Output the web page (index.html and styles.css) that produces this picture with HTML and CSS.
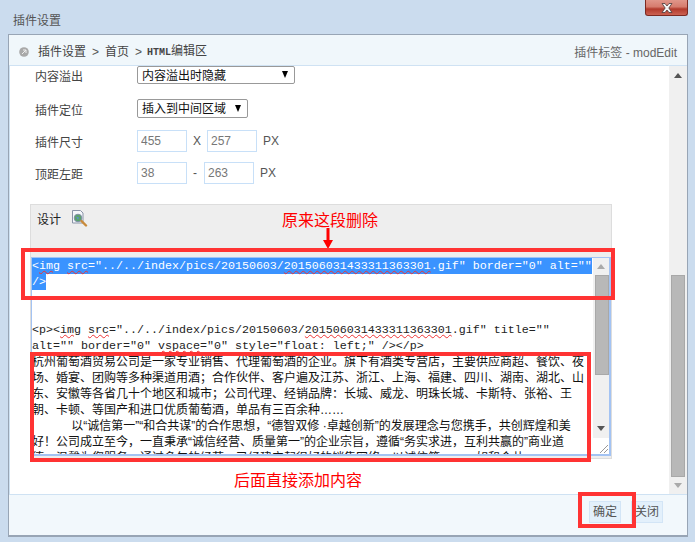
FILE: index.html
```html
<!DOCTYPE html>
<html lang="zh-CN">
<head>
<meta charset="utf-8">
<title>插件设置</title>
<link rel="stylesheet" href="styles.css">
</head>
<body>
<div class="window">
  <div class="titlebar">插件设置</div>
  <button class="close" type="button" aria-label="关闭">
    <svg width="14" height="12" viewBox="0 0 14 12"><path d="M2 1.500h3l2 2.500 2-2.500h3L8.800 6 12 10.500H9L7 8l-2 2.500H2L5.200 6z" fill="#f4f4f4" stroke="#4a3a3a" stroke-width=".8"/></svg>
  </button>
  <div class="panel">
    <div class="head">
      <nav class="crumbs">
        <svg class="crumb-icon" width="10" height="10" viewBox="0 0 10 10"><circle cx="5" cy="5" r="4.800" fill="#a9a9a9"/><path d="M3 7l4-4M4 3h3v3" stroke="#eee" stroke-width="1" fill="none"/></svg>
        <span>插件设置</span><span class="chev">&gt;</span><span>首页</span><span class="chev chev-last">&gt;</span><span><span class="tiny">HTML</span>编辑区</span>
      </nav>
      <div class="tag">插件标签 - modEdit</div>
    </div>
    <div class="body">
      <div class="scroll">
        <div class="row row-select">
          <label class="lbl">内容溢出</label>
          <div class="select select-wide"><span>内容溢出时隐藏</span><i class="tri-down dark"></i></div>
        </div>
        <div class="row row-select">
          <label class="lbl">插件定位</label>
          <div class="select select-narrow"><span>插入到中间区域</span><i class="tri-down dark"></i></div>
        </div>
        <div class="row row-input">
          <label class="lbl">插件尺寸</label>
          <div class="fields">
            <input class="num" value="455"><span class="unit">X</span><input class="num" value="257"><span class="unit">PX</span>
          </div>
        </div>
        <div class="row row-input">
          <label class="lbl">顶距左距</label>
          <div class="fields">
            <input class="num" value="38"><span class="unit dash">-</span><input class="num" value="263"><span class="unit">PX</span>
          </div>
        </div>
        <div class="editor">
          <div class="toolbar">
            <span>设计</span>
            <svg width="17" height="17" viewBox="0 0 17 17"><path d="M1.500.500h8l2.500 2.500v10h-10.500z" fill="#f4f6fa" stroke="#8a94a8"/><circle cx="7" cy="8" r="3.800" fill="#5aa36a" stroke="#7f8fa8"/><path d="M5 6.500l3 1-1 2.500z" fill="#5f8fd0"/><path d="M10.500 11l4.500 4.500" stroke="#c98a3a" stroke-width="2.400" stroke-linecap="round"/></svg>
          </div>
          <div class="area">
            <div class="code">
              <div class="line"><span class="sel">&lt;<span class="typo">img</span> <span class="typo">src</span>="../../index/pics/20150603/<span class="typo">201506031433311363301</span>.gif" border="0" alt=""</span></div>
              <div class="line"><span class="sel">/&gt;</span></div>
              <div class="line">&nbsp;</div>
              <div class="line">&nbsp;</div>
              <div class="line">&lt;p&gt;&lt;<span class="typo">img</span> <span class="typo">src</span>="../../index/pics/20150603/<span class="typo">201506031433311363301</span>.gif" title=""</div>
              <div class="line">alt="" border="0" <span class="typo">vspace</span>="0" style="float: left;" /&gt;&lt;/p&gt;</div>
              <div class="line cn">杭州葡萄酒贸易公司是一家专业销售、代理葡萄酒的企业。旗下有酒类专营店，主要供应商超、餐饮、夜</div>
              <div class="line cn">场、婚宴、团购等多种渠道用酒；合作伙伴、客户遍及江苏、浙江、上海、福建、四川、湖南、湖北、山</div>
              <div class="line cn">东、安徽等各省几十个地区和城市；公司代理、经销品牌：长城、威龙、明珠长城、卡斯特、张裕、王</div>
              <div class="line cn">朝、卡顿、等国产和进口优质葡萄酒，单品有三百余种……</div>
              <div class="line cn">　　　 以“诚信第一”“和合共谋”的合作思想，“德智双修 ·卓越创新”的发展理念与您携手，共创辉煌和美</div>
              <div class="line cn">好！公司成立至今，一直秉承“诚信经营、质量第一”的企业宗旨，遵循“务实求进，互利共赢的”商业道</div>
              <div class="line cn">德，温馨为您服务。通过多年的经营，已经建立起很好的销售网络，以诚信第一，一如和合共</div>
            </div>
            <div class="inner-bar">
              <div class="sb-btn sb-btn-up"><i class="tri-up soft"></i></div>
              <div class="inner-thumb"></div>
              <div class="sb-fill"><i class="tri-down mid"></i></div>
              <div class="corner">
                <svg width="14" height="14" viewBox="0 0 14 14"><path d="M13 5l-8 8M13 9l-4 4" stroke="#999" fill="none"/></svg>
              </div>
            </div>
          </div>
        </div>
      </div>
      <div class="outer-bar">
        <div class="outer-up"><i class="tri-up mid"></i></div>
        <div class="outer-thumb"></div>
        <div class="outer-down"><i class="tri-down soft"></i></div>
      </div>
    </div>
    <div class="foot">
      <button class="btn" type="button">确定</button>
      <button class="btn" type="button">关闭</button>
    </div>
  </div>

  <div class="note note-top">原来这段删除</div>
  <svg class="arrow" width="10" height="21" viewBox="0 0 10 21"><path d="M3.500 0h3v12h3.500l-5 9-5-9h3.500z" fill="#f00"/></svg>
  <div class="mark mark-top"></div>
  <div class="mark mark-mid"></div>
  <div class="note note-bottom">后面直接添加内容</div>
  <div class="mark mark-btn"></div>
</div>
</body>
</html>
```
FILE: styles.css
```css
* { box-sizing: border-box; }
html, body { margin: 0; padding: 0; }
body {
  font: 12px/16px "Liberation Sans", "Noto Sans CJK SC", sans-serif;
  color: #555;
  overflow: hidden;
}
.window {
  position: relative;
  width: 695px;
  height: 542px;
  background: #cbdcee;
  padding: 0 7px 5px 8px;
  display: flex;
  flex-direction: column;
  overflow: hidden;
}
.titlebar {
  height: 34px;
  flex: none;
  padding: 13px 0 0 5px;
  color: #555;
}
.close {
  position: absolute;
  left: 645px;
  top: 0;
  width: 43px;
  height: 16px;
  padding: 0;
  border: 1px solid #7c2a22;
  border-top: 0;
  border-radius: 0 0 3px 3px;
  background: linear-gradient(#e0968a, #d67c6e 45%, #b23a2c 60%, #cc6252);
  display: flex;
  align-items: center;
  justify-content: center;
}
.panel {
  flex: 1;
  border: 1px solid #98a5b5;
  border-bottom-width: 2px;
  display: flex;
  flex-direction: column;
  background: #fff;
}
.head {
  height: 31px;
  flex: none;
  background: #f0f7fb;
  border-bottom: 1px solid #cfe2f3;
  display: flex;
  align-items: center;
  justify-content: space-between;
  padding: 3px 10px 0 10px;
}
.crumbs { display: flex; align-items: center; color: #444; }
.crumb-icon { margin-right: 9px; }
.chev { width: 19px; text-align: center; color: #555; }
.chev-last { margin-right: -1px; }
.tiny { font: bold 10px/16px "Liberation Mono", monospace; }
.tag { color: #666; padding-top: 3px; }
.body {
  height: 428px;
  flex: none;
  display: flex;
  border-left: 1px solid #cfe2f3;
  overflow: hidden;
}
.scroll { flex: 1; padding-left: 25px; min-width: 0; }
.row { display: flex; align-items: center; }
.row-select { height: 18px; }
.row-select + .row-select { height: 19px; margin-top: 15px; }
.row-input { height: 22px; margin-top: 12px; }
.row-input + .row-input { margin-top: 10px; }
.lbl { width: 102px; color: #444; padding-top: 4px; }
.select {
  height: 100%;
  border: 1px solid #999;
  border-radius: 2px;
  background: #fff;
  color: #111;
  display: flex;
  align-items: center;
  justify-content: space-between;
  padding: 1px 6px 0 4px;
}
.select-wide { width: 158px; }
.select-narrow { width: 111px; }
.fields { display: flex; align-items: center; gap: 6px; }
.num {
  width: 50px;
  height: 22px;
  border: 1px solid #c8e0f8;
  background: #fff;
  padding: 0 3px;
  font: 12px "Liberation Sans", sans-serif;
  color: #777;
  outline: 0;
}
.unit { color: #555; }
.dash { width: 5px; }
.tri-up, .tri-down {
  display: block;
  width: 0;
  height: 0;
  border-left: 4px solid transparent;
  border-right: 4px solid transparent;
}
.tri-up { border-bottom: 5px solid #555; }
.tri-down { border-top: 5px solid #555; }
.dark.tri-down { border-top-color: #000; border-left-width: 3.500px; border-right-width: 3.500px; border-top-width: 7px; margin-top: -2px; }
.mid.tri-up { border-bottom-color: #555; }
.mid.tri-down { border-top-color: #555; }
.soft.tri-up { border-bottom-color: #aaa; }
.soft.tri-down { border-top-color: #aaa; }
.editor {
  width: 582px;
  height: 255px;
  margin: 20px 0 0 -5px;
  border: 1px solid #ddd;
  background: #eee;
  padding-bottom: 2px;
  display: flex;
  flex-direction: column;
}
.toolbar {
  height: 52px;
  flex: none;
  display: flex;
  align-items: flex-start;
  padding: 5px 0 0 6px;
  color: #222;
  gap: 10px;
}
.toolbar span { padding-top: 2px; }
.area {
  flex: 1;
  min-height: 0;
  border: solid #a3c3f3;
  border-width: 1px 2px 2px 1px;
  background: #fff;
  display: flex;
}
.code {
  width: 561px;
  flex: none;
  overflow: hidden;
  color: #222;
  font: 11.67px/16px "Liberation Mono", "Noto Sans CJK SC", monospace;
}
.line { height: 16px; white-space: pre; }
.cn { font: 12px/16px "Liberation Sans", "Noto Sans CJK SC", sans-serif; color: #111; }
.sel { display: inline-block; height: 16px; background: #3a93ff; color: #fff; }
.typo { text-decoration: underline wavy #e33; text-decoration-thickness: 1px; }
.inner-bar {
  width: 16px;
  flex: none;
  background: #f0f0f0;
  display: flex;
  flex-direction: column;
}
.sb-btn { height: 17px; flex: none; display: flex; justify-content: center; align-items: center; }
.inner-thumb {
  height: 100px;
  flex: none;
  margin-left: 2px;
  background: #b8b8b8;
  border: 1px solid #a8a8a8;
}
.sb-fill { flex: 1; display: flex; justify-content: center; align-items: flex-end; padding-bottom: 7px; }
.corner {
  height: 16px;
  flex: none;
  background: #fff;
  display: flex;
  justify-content: flex-end;
  align-items: flex-end;
}
.outer-bar {
  width: 18px;
  flex: none;
  background: #f0f0f0;
  display: flex;
  flex-direction: column;
}
.outer-up { height: 209px; flex: none; display: flex; justify-content: center; padding-top: 7px; }
.outer-thumb {
  height: 202px;
  flex: none;
  margin: 0 2px;
  background: #b8b8b8;
  border: 1px solid #a8a8a8;
}
.outer-down { flex: 1; display: flex; justify-content: center; align-items: center; }
.foot {
  flex: 1;
  background: #f2f8fc;
  border-top: 1px solid #cfe2f3;
  display: flex;
  justify-content: flex-end;
  align-items: flex-start;
  gap: 10px;
  padding: 6px 24px 0 0;
}
.btn {
  width: 32px;
  height: 22px;
  padding: 0;
  border: 1px solid #d3e5f6;
  background: #e3f0fb;
  font: 12px/20px "Liberation Sans", "Noto Sans CJK SC", sans-serif;
  color: #555;
}
.note {
  position: absolute;
  color: #f00;
  font: 16px/20px "Liberation Sans", "Noto Sans CJK SC", sans-serif;
  white-space: nowrap;
}
.note-top { left: 282px; top: 211px; }
.note-bottom { left: 234px; top: 471px; }
.arrow { position: absolute; left: 323px; top: 228px; }
.mark { position: absolute; border: 4px solid #ff3333; }
.mark-top { left: 21px; top: 248px; width: 594px; height: 52px; }
.mark-mid { left: 30px; top: 352px; width: 561px; height: 110px; }
.mark-btn { left: 578px; top: 492px; width: 58px; height: 36px; }
```
